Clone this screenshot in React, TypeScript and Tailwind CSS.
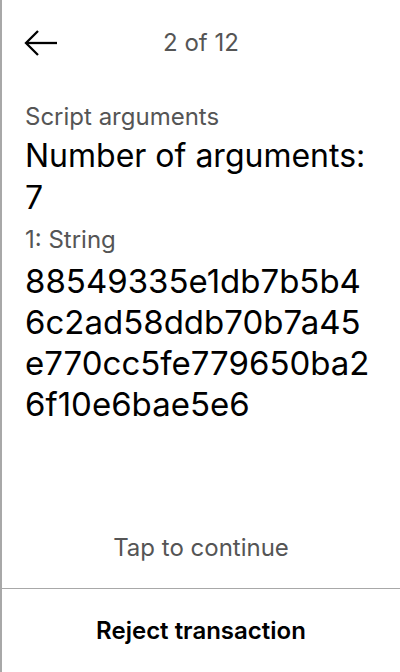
import React from "react";

export default function App() {
  return (
    <div
      className="w-[400px] h-[672px] bg-white flex flex-col border-l-2 border-[#a8a8a8] text-black"
      style={{ fontFamily: "Inter, 'Noto Sans', sans-serif" }}
    >
      <div className="h-[86px] flex items-center pl-[21px] pr-6 relative">
        <svg width="35" height="28" viewBox="0 0 35 28" fill="none" stroke="black" strokeWidth="2.3">
          <path d="M34 14H3" />
          <path d="M15 2L3 14l12 12" />
        </svg>
        <div className="absolute inset-0 flex items-center justify-center text-[24px] text-[#555]">2 of 12</div>
      </div>
      <div className="flex-1 flex flex-col pl-[23px] pr-6">
        <div className="text-[24px] leading-[30px] text-[#555] mt-[16px]">Script arguments</div>
        <div className="text-[32px] leading-[42px] mt-[3px]">Number of arguments: 7</div>
        <div className="text-[24px] leading-[30px] text-[#555] mt-[6px]">1: String</div>
        <div className="text-[33px] leading-[41px] mt-[6px] break-all">
          88549335e1db7b5b46c2ad58ddb70b7a45e770cc5fe779650ba26f10e6bae5e6
        </div>
      </div>
      <div className="h-[80px] flex items-center justify-center text-[24px] text-[#555]">Tap to continue</div>
      <div className="h-[84px] border-t border-[#a8a8a8] flex items-center justify-center text-[24px] font-semibold">
        Reject transaction
      </div>
    </div>
  );
}
